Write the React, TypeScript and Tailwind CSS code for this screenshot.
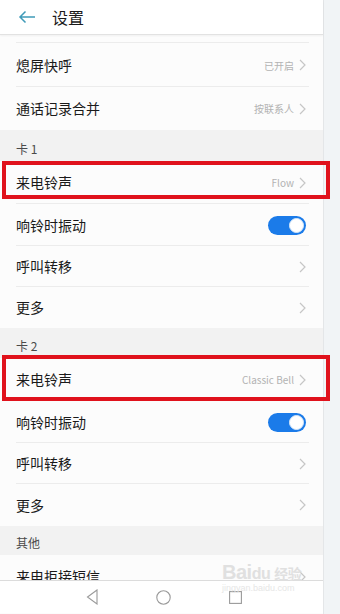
import React from "react";

const font = { fontFamily: '"Noto Sans CJK SC", "Noto Sans", sans-serif' };

function Chevron() {
  return (
    <svg width="7" height="12" viewBox="0 0 7 12" className="ml-[5px]">
      <path d="M1 1l5 5-5 5" fill="none" stroke="#c6c6c6" strokeWidth="1.2" />
    </svg>
  );
}

function Toggle() {
  return (
    <div className="flex h-[19px] w-[38px] items-center justify-end rounded-full bg-[#1b7be9] pr-[2px]">
      <div className="h-[15px] w-[15px] rounded-full border border-[#d8e8f8] bg-white" />
    </div>
  );
}

type RowProps = {
  label: string;
  value?: string;
  toggle?: boolean;
  chevron?: boolean;
  divider?: boolean;
  h: string;
  children?: React.ReactNode;
};

function Row({ label, value, toggle, chevron = true, divider = true, h, children }: RowProps) {
  return (
    <div className={`relative flex items-center ${h}`}>
      <div className="flex h-full flex-1 items-center pl-4 pr-[17px]">
        <span className="flex-1 text-[14px] text-[#1a1a1a]">{label}</span>
        {value && <span className="text-[10px] text-[#b3b3b3]">{value}</span>}
        {toggle ? <Toggle /> : chevron && <Chevron />}
      </div>
      {divider && <div className="absolute bottom-0 left-4 right-[14px] h-px bg-[#ececec]" />}
      {children}
    </div>
  );
}

function Section({ label, h }: { label: string; h: string }) {
  return (
    <div className={`flex items-end bg-[#f2f2f2] pb-[6px] pl-4 text-[12px] leading-none text-[#4a4a4a] ${h}`}>
      {label}
    </div>
  );
}

export default function App() {
  return (
    <div className="relative flex h-[614px] w-[340px] overflow-hidden bg-[#f1f4f6]" style={font}>
      <div className="flex w-[324px] flex-col border-r border-[#e4e6e8] bg-[#fcfcfc]">
        {/* header */}
        <div className="flex h-[35px] shrink-0 items-center border-b border-[#e2e2e2] bg-white shadow-[0_1px_2px_rgba(0,0,0,0.05)]">
          <svg width="18" height="14" viewBox="0 0 18 14" className="ml-[18px]">
            <path d="M17 7H2M7.5 1.5L2 7l5.5 5.5" fill="none" stroke="#3f9ab8" strokeWidth="1.5" />
          </svg>
          <span className="ml-[16px] text-[16px] text-[#1a1a1a]">设置</span>
        </div>

        <div className="relative h-[8px] shrink-0">
          <div className="absolute bottom-0 left-4 right-[14px] h-px bg-[#ececec]" />
        </div>
        <Row label="熄屏快呼" value="已开启" h="h-[44px]" />
        <Row label="通话记录合并" value="按联系人" h="h-[43px]" divider={false} />

        <Section label="卡 1" h="h-[31px]" />
        <Row label="来电铃声" value="Flow" h="h-[43px]">
          <div className="absolute left-[2px] top-0 h-[38px] w-[328px] border-[4px] border-[#e0121c]" />
        </Row>
        <Row label="响铃时振动" toggle h="h-[42px]" />
        <Row label="呼叫转移" h="h-[41px]" />
        <Row label="更多" h="h-[41px]" divider={false} />

        <Section label="卡 2" h="h-[30px]" />
        <Row label="来电铃声" value="Classic Bell" h="h-[43px]">
          <div className="absolute left-[2px] top-[-3px] h-[46px] w-[328px] border-[4px] border-[#e0121c]" />
        </Row>
        <Row label="响铃时振动" toggle h="h-[42px]" />
        <Row label="呼叫转移" h="h-[41px]" />
        <Row label="更多" h="h-[42px]" divider={false} />

        <Section label="其他" h="h-[29px]" />
        <div className="h-[25px] shrink-0 overflow-hidden">
          <Row label="来电拒接短信" h="h-[43px]" divider={false} />
        </div>

        {/* nav bar */}
        <div className="flex h-[33px] shrink-0 items-center border-t border-[#dcdcdc] bg-white">
          <div className="flex w-full items-center">
            <svg width="12" height="16" viewBox="0 0 12 16" className="ml-[86px]">
              <path d="M11 1L1.5 8 11 15z" fill="none" stroke="#9a9a9a" strokeWidth="1.1" />
            </svg>
            <svg width="15" height="15" viewBox="0 0 15 15" className="ml-[58px]">
              <circle cx="7.5" cy="7.5" r="6.7" fill="none" stroke="#9a9a9a" strokeWidth="1.1" />
            </svg>
            <svg width="13" height="13" viewBox="0 0 13 13" className="ml-[58px]">
              <rect x="0.6" y="0.6" width="11.8" height="11.8" fill="none" stroke="#9a9a9a" strokeWidth="1.1" />
            </svg>
          </div>
        </div>
      </div>

      {/* watermark */}
      <div className="pointer-events-none absolute left-[222px] top-[562px] flex flex-col items-start leading-none text-[#e0e0e0]">
        <span className="text-[20px] font-bold tracking-tight" style={{ fontFamily: '"Liberation Sans", sans-serif' }}>
          Bai<span className="text-[16px]">du</span>
          <span className="ml-1 text-[14px]" style={font}>经验</span>
        </span>
        <span className="mt-[2px] text-[9px] text-[#e6e6e6]" style={{ fontFamily: '"Liberation Sans", sans-serif' }}>
          jingyan.baidu.com
        </span>
      </div>
    </div>
  );
}
